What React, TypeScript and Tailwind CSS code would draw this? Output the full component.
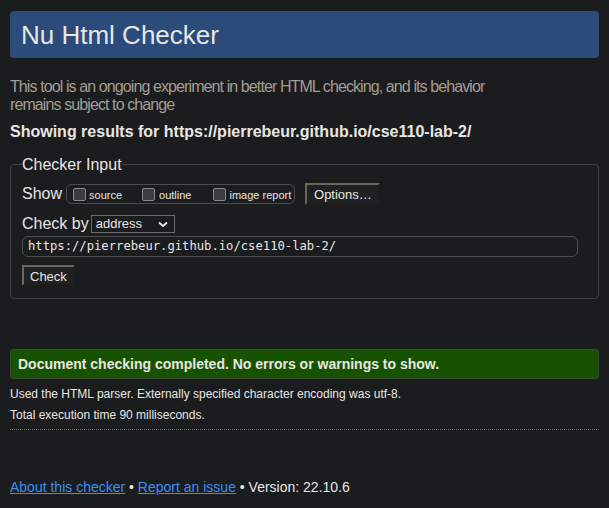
export default function App() {
  return (
    <div className="min-h-[508px] bg-[#1b1c1e] px-[10px] pt-[11px] text-[#e8e6e3] font-['Liberation_Sans',Arial,sans-serif]">
      <h1 className="rounded-[4px] bg-[#2b4b7a] px-[11px] h-[47px] flex items-center text-[26px] leading-none">
        Nu Html Checker
      </h1>

      <p className="mt-[20px] max-w-[490px] text-[16px] leading-[18px] tracking-[-0.9px] text-[#a39e93]">
        This tool is an ongoing experiment in better HTML checking, and its behavior remains subject to change
      </p>

      <p className="mt-[8px] text-[16px] font-bold leading-[19px]">
        Showing results for https://pierrebeur.github.io/cse110-lab-2/
      </p>

      <fieldset className="mt-[14px] rounded-[4px] border border-[#3e4144] px-[11px] pb-[10px] pt-[8px]">
        <legend className="text-[16px] leading-[19px] px-0">Checker Input</legend>

        <div className="flex items-center">
          <span className="text-[16px]">Show</span>
          <div className="ml-[4px] flex h-[20px] w-[229px] items-center rounded-[6px] border border-[#4a4d50] pl-[6px] text-[11px]">
            <span className="h-[13px] w-[13px] rounded-[2px] border border-[#8a8a8a] bg-[#3a3c3e]" />
            <span className="ml-[3px] mt-[3px]">source</span>
            <span className="ml-[20px] h-[13px] w-[13px] rounded-[2px] border border-[#8a8a8a] bg-[#3a3c3e]" />
            <span className="ml-[4px] mt-[3px]">outline</span>
            <span className="ml-[22px] h-[13px] w-[13px] rounded-[2px] border border-[#8a8a8a] bg-[#3a3c3e]" />
            <span className="ml-[3px] mt-[3px]">image report</span>
          </div>
          <button className="ml-[10px] h-[22px] w-[75px] border-2 border-t-[#6a6660] border-l-[#6a6660] border-r-[#1f1d1a] border-b-[#1f1d1a] bg-[#1f2122] text-left pl-[7px] text-[13px]">
            Options…
          </button>
        </div>

        <div className="mt-[6px] flex items-center">
          <span className="text-[16px]">Check by</span>
          <div className="ml-[2px] flex h-[18px] w-[84px] items-center justify-between border border-[#6a6a6a] bg-[#1b1c1e] pl-[4px] pr-[6px] text-[13px]">
            <span>address</span>
            <svg width="10" height="7" viewBox="0 0 10 7" fill="none">
              <path d="M1 1.5 L5 5 L9 1.5" stroke="#e8e6e3" strokeWidth="1.8" />
            </svg>
          </div>
        </div>

        <div className="flex h-[21px] w-[556px] items-center rounded-[6px] border border-[#4a4d50] px-[5px] text-[12.2px] font-['DejaVu_Sans_Mono',monospace]">
          https://pierrebeur.github.io/cse110-lab-2/
        </div>

        <button className="mt-[8px] h-[21px] w-[53px] border-2 border-t-[#6a6660] border-l-[#6a6660] border-r-[#1f1d1a] border-b-[#1f1d1a] bg-[#1f2122] text-left pl-[6px] text-[13px]">
          Check
        </button>
      </fieldset>

      <div className="mt-[50px] flex h-[30px] items-center rounded-[3px] border border-[#3a4a30] bg-[#175200] px-[7px] text-[14px] font-bold">
        Document checking completed. No errors or warnings to show.
      </div>

      <p className="mt-[8px] text-[12px] leading-[14px]">
        Used the HTML parser. Externally specified character encoding was utf-8.
      </p>
      <p className="mt-[7px] text-[12px] leading-[14px]">Total execution time 90 milliseconds.</p>

      <div className="mt-[7px] border-t border-dotted border-[#6a6a6a]" />

      <p className="mt-[49px] text-[14px] leading-[16px]">
        <a href="#" className="text-[#3b8ff5] underline">About this checker</a>
        {" • "}
        <a href="#" className="text-[#3b8ff5] underline">Report an issue</a>
        {" • Version: 22.10.6"}
      </p>
    </div>
  )
}
